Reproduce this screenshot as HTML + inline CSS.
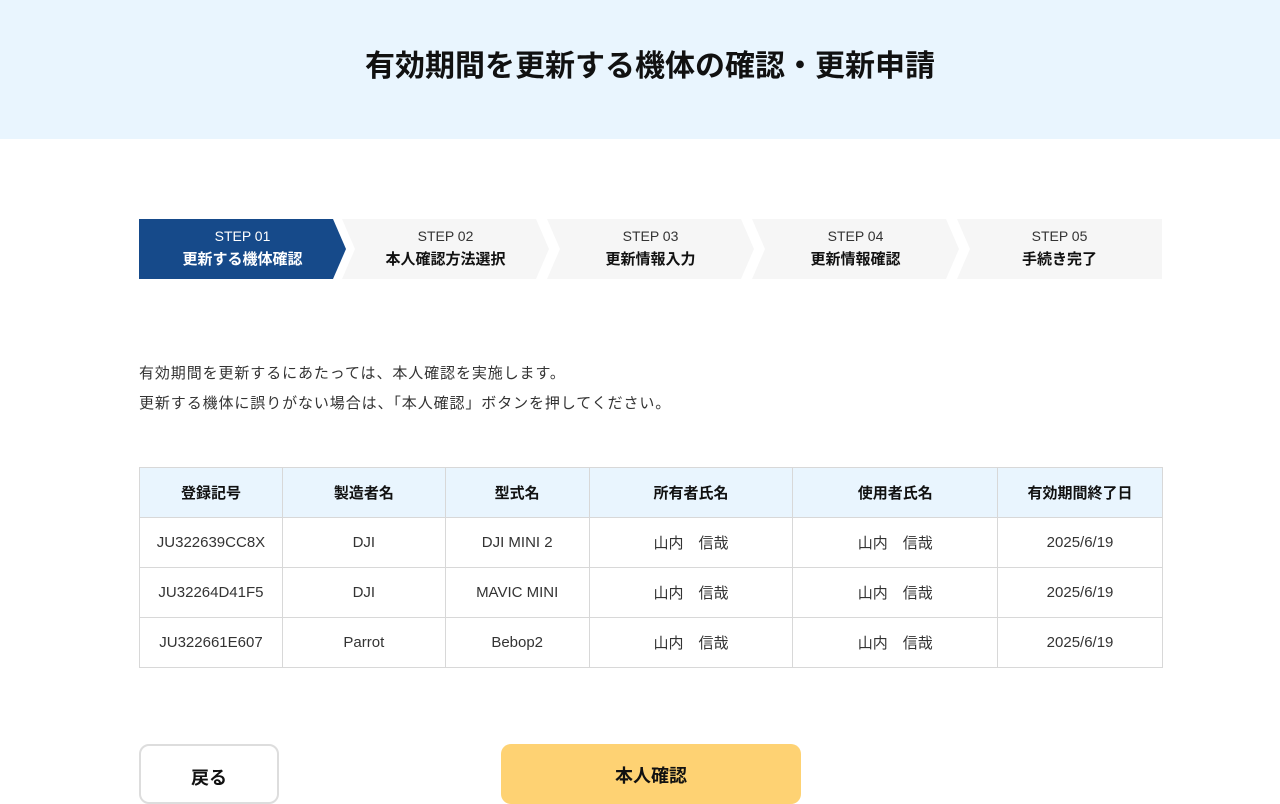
<!DOCTYPE html><html><head><meta charset="utf-8"><style>
body{margin:0;width:1280px;height:780px;overflow:hidden;background:#fff;font-family:"Liberation Sans","Noto Sans CJK JP",sans-serif;color:#222}
.hd{height:139px;background:#e9f5fe;display:flex;align-items:center;justify-content:center;font-size:30px;font-weight:bold;color:#111;padding-bottom:14px;padding-left:20px;box-sizing:border-box}
.step{position:absolute;top:219px;height:60px;width:207px;background:#f6f6f6;text-align:center;clip-path:polygon(0 0,194px 0,207px 30px,194px 60px,0 60px,13px 30px);font-size:14px;color:#333}
.step b{display:block;font-size:15px;color:#111;margin-top:4px}
.step div{padding-top:9px}
.t{position:absolute;left:139px;font-size:15px;letter-spacing:0.9px;color:#333}
table{position:absolute;left:139px;top:467px;width:1024px;border-collapse:collapse;font-size:15px}
td,th{border:1px solid #d8d8d8;text-align:center;height:49px;padding:0;color:#333;font-weight:normal}
th{background:#e9f5fe;font-weight:bold;color:#111;height:49px}
.btn{position:absolute;top:744px;height:60px;box-sizing:border-box;border-radius:10px;text-align:center;font-weight:bold;font-size:18px;padding-top:18px;color:#111}
</style></head><body>
<div class="hd">有効期間を更新する機体の確認・更新申請</div>
<div class="step" style="left:139px;background:#164a8a;color:#fff;clip-path:polygon(0 0,194px 0,207px 30px,194px 60px,0 60px)"><div>STEP 01<b style="color:#fff">更新する機体確認</b></div></div>
<div class="step" style="left:342px"><div>STEP 02<b>本人確認方法選択</b></div></div>
<div class="step" style="left:547px"><div>STEP 03<b>更新情報入力</b></div></div>
<div class="step" style="left:752px"><div>STEP 04<b>更新情報確認</b></div></div>
<div class="step" style="left:957px;clip-path:polygon(0 0,207px 0,207px 60px,0 60px,13px 30px);width:205px"><div>STEP 05<b>手続き完了</b></div></div>
<div class="t" style="top:362px">有効期間を更新するにあたっては、本人確認を実施します。</div>
<div class="t" style="top:392px">更新する機体に誤りがない場合は、「本人確認」ボタンを押してください。</div>
<table><colgroup><col style="width:143px"><col style="width:163px"><col style="width:144px"><col style="width:204px"><col style="width:205px"><col style="width:165px"></colgroup>
<tr><th>登録記号</th><th>製造者名</th><th>型式名</th><th>所有者氏名</th><th>使用者氏名</th><th>有効期間終了日</th></tr>
<tr><td>JU322639CC8X</td><td>DJI</td><td>DJI MINI 2</td><td>山内　信哉</td><td>山内　信哉</td><td>2025/6/19</td></tr>
<tr><td>JU32264D41F5</td><td>DJI</td><td>MAVIC MINI</td><td>山内　信哉</td><td>山内　信哉</td><td>2025/6/19</td></tr>
<tr><td>JU322661E607</td><td>Parrot</td><td>Bebop2</td><td>山内　信哉</td><td>山内　信哉</td><td>2025/6/19</td></tr>
</table>
<div class="btn" style="left:139px;width:140px;border:2px solid #ddd">戻る</div>
<div class="btn" style="left:501px;width:300px;background:#fed273">本人確認</div>
</body></html>
